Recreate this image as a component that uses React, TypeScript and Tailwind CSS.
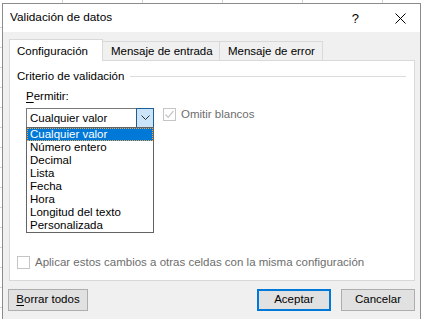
import React from "react";

const items = [
  "Cualquier valor",
  "Número entero",
  "Decimal",
  "Lista",
  "Fecha",
  "Hora",
  "Longitud del texto",
  "Personalizada",
];

function DisabledCheck({ checked }: { checked?: boolean }) {
  return (
    <div className="w-[13px] h-[13px] border border-[#c5c5c5] bg-white flex items-center justify-center shrink-0">
      {checked && (
        <svg width="11" height="11" viewBox="0 0 11 11">
          <path d="M1.5 5.5 L4.2 8.3 L9.5 2" fill="none" stroke="#c5c5c5" strokeWidth="1.2" />
        </svg>
      )}
    </div>
  );
}

export default function App() {
  return (
    <div className="w-[423px] h-[319px] bg-white overflow-hidden flex flex-col font-['Liberation_Sans',Arial,sans-serif] text-[11.5px] text-black">
      {/* sheet strip on top */}
      <div className="h-[3px] flex shrink-0">
        <div className="w-[63px] border-r border-[#d4d4d4]" />
        <div className="w-[80px] border-r border-[#d4d4d4]" />
        <div className="w-[80px] border-r border-[#d4d4d4]" />
        <div className="w-[80px] border-r border-[#d4d4d4]" />
        <div className="w-[80px] border-r border-[#d4d4d4]" />
      </div>
      <div className="flex flex-1 min-h-0">
        <div className="w-[2px] flex flex-col shrink-0">
          <div className="h-[25px] border-b border-[#d4d4d4]" />
          <div className="h-[20px] border-b border-[#d4d4d4]" />
          <div className="h-[20px] border-b border-[#d4d4d4]" />
          <div className="h-[20px] border-b border-[#d4d4d4]" />
          <div className="h-[20px] border-b border-[#d4d4d4]" />
          <div className="h-[20px] border-b border-[#d4d4d4]" />
          <div className="h-[20px] border-b border-[#d4d4d4]" />
          <div className="h-[20px] border-b border-[#d4d4d4]" />
          <div className="h-[20px] border-b border-[#d4d4d4]" />
          <div className="h-[20px] border-b border-[#d4d4d4]" />
          <div className="h-[20px] border-b border-[#d4d4d4]" />
          <div className="h-[20px] border-b border-[#d4d4d4]" />
          <div className="h-[20px] border-b border-[#d4d4d4]" />
          <div className="h-[20px] border-b border-[#d4d4d4]" />
          <div className="h-[20px] border-b border-[#d4d4d4]" />
        </div>
        {/* dialog */}
        <div className="w-[419px] border-l border-r border-t border-[#8c8c8c] flex flex-col shrink-0">
          {/* title bar */}
          <div className="h-[28px] bg-white flex items-center shrink-0">
            <span className="ml-[7px] text-[11.8px]">Validación de datos</span>
            <span className="ml-auto text-[13px] leading-none mr-[36px]">?</span>
            <svg width="11" height="11" viewBox="0 0 11 11" className="mr-[14px]">
              <path d="M0.5 0.5 L10.5 10.5 M10.5 0.5 L0.5 10.5" stroke="#000" strokeWidth="1" />
            </svg>
          </div>
          {/* body */}
          <div className="flex-1 bg-[#f0f0f0] flex flex-col pt-[7px]">
            {/* tabs */}
            <div className="flex items-start ml-[6px] h-[22px] relative z-10">
              <div className="w-[94px] h-[22px] bg-white border-l border-t border-r border-[#d9d9d9] pl-[7px] pt-[4px] leading-[14px]">
                Configuración
              </div>
              <div className="mt-[2px] w-[117px] h-[19px] border-t border-r border-[#d9d9d9] bg-[#f0f0f0] pl-[8px] pt-[2px] leading-[14px]">
                Mensaje de entrada
              </div>
              <div className="mt-[2px] w-[103px] h-[19px] border-t border-r border-[#d9d9d9] bg-[#f0f0f0] pl-[8px] pt-[2px] leading-[14px]">
                Mensaje de error
              </div>
            </div>
            {/* panel */}
            <div className="relative -mt-[1px] ml-[6px] mr-[5px] h-[221px] bg-white border border-[#d9d9d9] flex flex-col">
              <div className="mt-[8px] h-[15px] flex items-center">
                <span className="ml-[7px] leading-[15px]">Criterio de validación</span>
                <div className="flex-1 h-px bg-[#dcdcdc] ml-[6px] mr-[8px]" />
              </div>
              <div className="mt-[5px] h-[15px] pl-[16px] leading-[15px]">
                <span className="underline underline-offset-2">P</span>ermitir:
              </div>
              <div className="mt-[4px] flex items-start pl-[16px]">
                <div className="w-[128px] h-[20px] flex bg-white">
                  <div className="flex-1 border-l border-t border-b border-[#7a7a7a] pl-[3px] leading-[18px]">
                    Cualquier valor
                  </div>
                  <div className="w-[18px] h-[20px] border border-[#1f5d99] bg-[#cce4f7] flex items-center justify-center">
                    <svg width="9" height="6" viewBox="0 0 9 6">
                      <path d="M0.5 0.5 L4.5 4.5 L8.5 0.5" fill="none" stroke="#333" strokeWidth="1" />
                    </svg>
                  </div>
                </div>
                <div className="ml-[9px] flex items-center">
                  <DisabledCheck checked />
                  <span className="ml-[5px] text-[#6d6d6d] leading-[13px]">Omitir blancos</span>
                </div>
              </div>
              <div className="mt-auto mb-[11px] ml-[7px] flex items-center h-[13px]">
                <DisabledCheck />
                <span className="ml-[5px] text-[#6d6d6d] leading-[13px]">
                  Aplicar estos cambios a otras celdas con la misma configuración
                </span>
              </div>
              {/* dropdown list overlay */}
              <div className="absolute left-[16px] top-[66px] w-[128px] h-[106px] bg-white border border-[#646464] flex flex-col">
                {items.map((t, i) =>
                  i === 0 ? (
                    <div
                      key={t}
                      className="h-[13px] leading-[11px] bg-[#0078d7] text-white border border-dotted border-[#f5a742] pl-[2px]"
                    >
                      {t}
                    </div>
                  ) : (
                    <div key={t} className="h-[13px] leading-[13px] pl-[3px]">
                      {t}
                    </div>
                  )
                )}
              </div>
            </div>
            {/* buttons */}
            <div className="mt-[8px] flex ml-[5px] mr-[5px]">
              <div className="w-[80px] h-[22px] bg-[#e1e1e1] border border-[#adadad] flex items-center justify-center">
                <span>
                  <span className="underline underline-offset-2">B</span>orrar todos
                </span>
              </div>
              <div className="ml-auto w-[74px] h-[22px] bg-[#e1e1e1] border-2 border-[#0078d7] flex items-center justify-center">
                Aceptar
              </div>
              <div className="ml-[10px] w-[74px] h-[22px] bg-[#e1e1e1] border border-[#adadad] flex items-center justify-center">
                Cancelar
              </div>
            </div>
          </div>
        </div>
        <div className="w-[2px] shrink-0" />
      </div>
    </div>
  );
}
